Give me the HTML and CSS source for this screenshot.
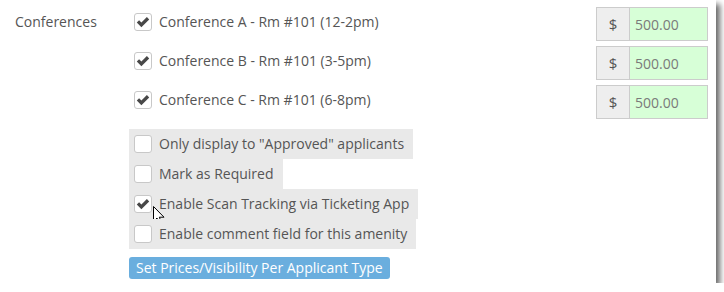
FILE: index.html
```html
<!DOCTYPE html>
<html>
<head>
<meta charset="utf-8">
<link rel="stylesheet" href="styles.css">
</head>
<body>
<div class="frame">
  <div class="field">
    <div class="field-label">Conferences</div>
    <div class="field-body">
      <div class="conf-row">
        <label class="conf"><span class="cb checked"><svg viewBox="0 0 16 16"><path d="M1.8 8.6 L4.1 6.3 L6.4 8.6 L11.9 3.1 L14.2 5.4 L6.4 13.2 Z"/></svg></span>Conference A - Rm #101 (12-2pm)</label>
        <div class="price"><span class="addon">$</span><span class="amount">500.00</span></div>
      </div>
      <div class="conf-row">
        <label class="conf"><span class="cb checked"><svg viewBox="0 0 16 16"><path d="M1.8 8.6 L4.1 6.3 L6.4 8.6 L11.9 3.1 L14.2 5.4 L6.4 13.2 Z"/></svg></span>Conference B - Rm #101 (3-5pm)</label>
        <div class="price"><span class="addon">$</span><span class="amount">500.00</span></div>
      </div>
      <div class="conf-row">
        <label class="conf"><span class="cb checked"><svg viewBox="0 0 16 16"><path d="M1.8 8.6 L4.1 6.3 L6.4 8.6 L11.9 3.1 L14.2 5.4 L6.4 13.2 Z"/></svg></span>Conference C - Rm #101 (6-8pm)</label>
        <div class="price"><span class="addon">$</span><span class="amount">500.00</span></div>
      </div>
      <div class="options">
        <label class="opt"><span class="cb"></span>Only display to "Approved" applicants</label>
        <label class="opt"><span class="cb"></span>Mark as Required</label>
        <label class="opt"><span class="cb checked"><svg viewBox="0 0 16 16"><path d="M1.8 8.6 L4.1 6.3 L6.4 8.6 L11.9 3.1 L14.2 5.4 L6.4 13.2 Z"/></svg></span>Enable Scan Tracking via Ticketing App<svg class="cursor" viewBox="0 0 12 19"><path d="M0.5 0.5 L0.5 15.5 L4 12 L6.5 18 L8.7 17 L6.3 11.2 L11 11.2 Z"/></svg></label>
        <label class="opt"><span class="cb"></span>Enable comment field for this amenity</label>
      </div>
      <button class="btn">Set Prices/Visibility Per Applicant Type</button>
    </div>
  </div>
</div>
</body>
</html>
```

FILE: styles.css
```css
html, body {
  margin: 0;
  padding: 0;
  background: #fff;
}
body {
  font-family: "Open Sans", "Liberation Sans", sans-serif;
  font-size: 14px;
  color: #555;
}
.frame {
  width: 716px;
  height: 283px;
  background: #fff;
  box-shadow: 4px 4px 6px rgba(0, 0, 0, 0.6);
  box-sizing: border-box;
  padding: 7px 8px 0 0;
}
.field {
  display: flex;
}
.field-label {
  width: 114px;
  padding-left: 15px;
  padding-top: 5px;
  line-height: 20px;
}
.field-body {
  flex: 1;
  display: flex;
  flex-direction: column;
  align-items: flex-start;
}
.conf-row {
  align-self: stretch;
  display: flex;
  justify-content: space-between;
  align-items: flex-start;
  height: 34px;
  margin-bottom: 5px;
}
.conf {
  display: flex;
  align-items: center;
  padding-left: 5px;
  margin-top: 5px;
  line-height: 20px;
}
.cb {
  box-sizing: border-box;
  width: 18px;
  height: 18px;
  border: 1px solid #c8c8c8;
  border-radius: 3px;
  background: #fff;
  margin-right: 7px;
  display: inline-flex;
  flex: none;
}
.cb svg {
  width: 16px;
  height: 16px;
}
.cb svg path {
  fill: #484848;
}
.price {
  display: flex;
  height: 34px;
  box-sizing: border-box;
  border: 1px solid #ccc;
  width: 112px;
}
.addon {
  width: 32px;
  background: #eee;
  border-right: 1px solid #ccc;
  display: flex;
  align-items: center;
  justify-content: center;
  color: #555;
  font-size: 15px;
}
.amount {
  flex: 1;
  background: #d7ffd7;
  color: #7a7a7a;
  padding-left: 5px;
  display: flex;
  align-items: center;
}
.options {
  margin-top: 5px;
  display: flex;
  flex-direction: column;
  align-items: flex-start;
}
.opt {
  position: relative;
  display: flex;
  align-items: center;
  background: #e9e9e9;
  padding: 5px 9px 5px 5px;
  line-height: 20px;
}
.cursor {
  position: absolute;
  left: 24px;
  top: 17px;
  width: 12px;
  height: 19px;
}
.cursor path {
  fill: #fff;
  stroke: #000;
  stroke-width: 1;
}
.btn {
  margin-top: 8px;
  font-family: "Open Sans", "Liberation Sans", sans-serif;
  font-size: 14px;
  color: #fff;
  background: #6aaede;
  border: none;
  border-radius: 3px;
  height: 22px;
  padding: 0 7px;
  line-height: 22px;
}
```
